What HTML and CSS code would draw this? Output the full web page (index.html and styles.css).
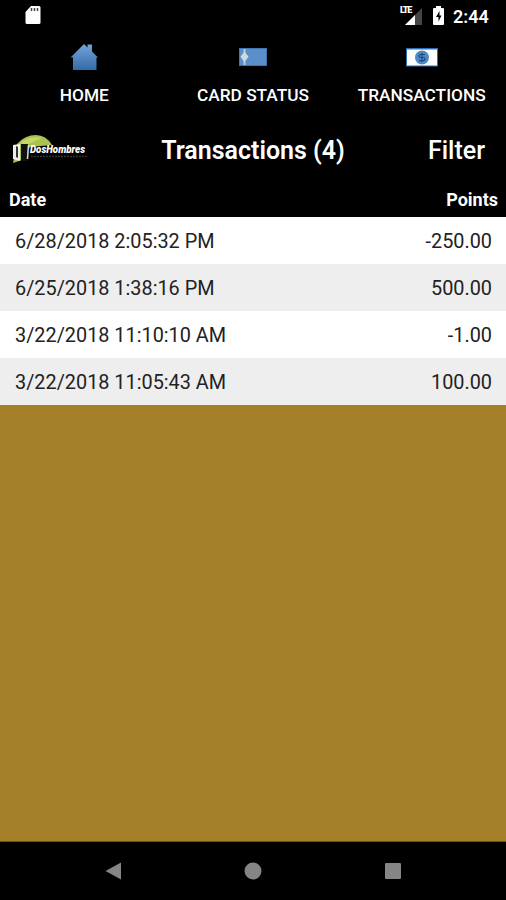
FILE: index.html
```html
<!DOCTYPE html>
<html lang="en">
<head>
<meta charset="utf-8">
<title>Transactions</title>
<link rel="stylesheet" href="styles.css">
</head>
<body>
<div class="status">
  <svg class="sd" width="16" height="20" viewBox="0 0 16 20"><path d="M6 1h8q1.500 0 1.500 1.500v15q0 1.500-1.500 1.500H2q-1.500 0-1.500-1.500V7z" fill="#fff"/><path d="M6.500 3v3M9.500 3v3M12.500 3v3" stroke="#444" stroke-width="1.500"/></svg>
  <div class="signal">
    <span class="lte">LTE</span>
    <svg width="17" height="17" viewBox="0 0 17 17"><path d="M17 0v17H0z" fill="#454545"/><path d="M10 7v10H0z" fill="#fff"/></svg>
  </div>
  <svg class="battery" width="11" height="19" viewBox="0 0 11 19"><path d="M3 0h5v2h2q1 0 1 1v15q0 1-1 1H1q-1 0-1-1V3q0-1 1-1h2z" fill="#fff"/><path d="M6.500 5L3 11h2.500v4.500l3-6H6.500z" fill="#000"/></svg>
  <span class="clock">2:44</span>
</div>
<nav class="tabs">
  <a class="tab">
    <svg width="28" height="28" viewBox="0 0 28 28"><defs><linearGradient id="blue" x2="0" y2="1"><stop stop-color="#73a5d8"/><stop offset="1" stop-color="#346aa9"/></linearGradient></defs><path d="M.5 14.500L14 1l3.500 3.500V1.500H22v7l6 6h-1.500V27H3V14.500z" fill="url(#blue)"/></svg>
    <span>HOME</span>
  </a>
  <a class="tab">
    <svg width="28" height="28" viewBox="0 0 28 28"><path d="M0 5h28v18H0z" fill="#5a90ca"/><path d="M.5 5.500h27v17H.5z" fill="none" stroke="#3f76b2"/><path d="M5.500 6v16" stroke="#b5cae0" stroke-width="2"/><path d="M5.500 8.500l4 5.200-4 5.200-4-5.200z" fill="#d4d8dd"/></svg>
    <span>CARD STATUS</span>
  </a>
  <a class="tab">
    <svg width="32" height="28" viewBox="0 0 32 28"><path d="M0 5h32v18.500H0z" fill="#2e6db0"/><path d="M1 6.500h30v16H1z" fill="#fff"/><circle cx="16" cy="14.500" r="7" fill="#4f8ac5"/><path d="M19 11.500h-4q-2 0-2 1.500t2 1.500h2q2 0 2 1.600t-2 1.600h-4M16 10v9" fill="none" stroke="#1d4c83" stroke-width="1.200"/></svg>
    <span>TRANSACTIONS</span>
  </a>
</nav>
<header class="title">
  <svg width="78" height="34" viewBox="0 0 78 34"><path d="M1 29L5 10Q13 1 24 1q10 0 16 10l-22 2-8 13z" fill="#a9c34d"/><path d="M8 9Q18 1 30 4L14 11z" fill="#c5d56b"/><path d="M1 11l7-1v17l-7-2z" fill="#eee"/><path d="M4 12l2 1v11l-2-1z" fill="#333"/><path d="M9 10h7v17H9z" fill="#111"/><path d="M16.500 11l-1 14" stroke="#ddd" stroke-width="1.500"/><text class="brand" x="18" y="19" textLength="55" lengthAdjust="spacingAndGlyphs">DosHombres</text><path d="M19 22.500h56" stroke="#343434" stroke-width="1.500" stroke-dasharray="2 1"/></svg>
  <h1>Transactions (4)</h1>
  <a class="filter">Filter</a>
</header>
<div class="columns"><span>Date</span><span>Points</span></div>
<main>
  <div class="row"><span>6/28/2018 2:05:32 PM</span><span>-250.00</span></div>
  <div class="row"><span>6/25/2018 1:38:16 PM</span><span>500.00</span></div>
  <div class="row"><span>3/22/2018 11:10:10 AM</span><span>-1.00</span></div>
  <div class="row"><span>3/22/2018 11:05:43 AM</span><span>100.00</span></div>
</main>
<footer class="system">
  <svg width="18" height="18" viewBox="0 0 18 18"><path d="M1.500 9L17 .5v17z"/></svg>
  <svg width="18" height="18" viewBox="0 0 18 18"><circle cx="9" cy="9" r="8.500"/></svg>
  <svg width="18" height="18" viewBox="0 0 18 18"><rect x="1" y="1" width="16" height="16" rx="1"/></svg>
</footer>
</body>
</html>
```
FILE: styles.css
```css
* { box-sizing: border-box; }
body {
  margin: 0;
  height: 900px;
  display: flex;
  flex-direction: column;
  background: #000;
  color: #fff;
  font-family: Roboto, "Liberation Sans", sans-serif;
  overflow: hidden;
}
svg { display: block; flex: none; overflow: visible; }
.status {
  height: 32px;
  display: flex;
  align-items: center;
  padding: 0 18px 0 25px;
}
.sd { margin-top: -2px; }
.signal {
  position: relative;
  margin-left: auto;
  width: 22px;
  height: 19px;
  display: flex;
  align-items: flex-end;
  justify-content: flex-end;
}
.lte {
  position: absolute;
  left: 0;
  top: 0;
  font-size: 9px;
  line-height: 9px;
  font-weight: 900;
  letter-spacing: -1.2px;
}
.signal, .battery { margin-top: -1px; }
.battery { margin-left: 11px; margin-right: 9px; }
.clock { width: 35px; font-size: 18px; font-weight: 600; white-space: nowrap; }
.tabs {
  height: 86px;
  display: grid;
  grid-template-columns: repeat(3, 1fr);
  padding-top: 11px;
}
.tab {
  display: flex;
  flex-direction: column;
  align-items: center;
  font-size: 17.300px;
  font-weight: 500;
  line-height: 20px;
  gap: 14px;
}
.title {
  height: 65px;
  display: grid;
  grid-template-columns: 110px 1fr 101px;
  align-items: center;
  padding: 0 21px 0 12px;
}
.title h1 { margin: 0; text-align: center; font-size: 25px; font-weight: 600; }
.filter { text-align: right; font-size: 25px; font-weight: 500; }
.brand { font-size: 11px; font-weight: 900; font-style: italic; fill: #fff; }
.columns {
  height: 34px;
  display: flex;
  justify-content: space-between;
  align-items: center;
  padding: 0 8px 2px 9px;
  font-size: 18px;
  font-weight: 700;
}
main { flex: 1; background: #a5802b; border-bottom: 1px solid #705516; }
.row {
  height: 47px;
  display: flex;
  justify-content: space-between;
  align-items: center;
  padding: 2px 14px 0 15px;
  background: #fff;
  color: #222;
  font-size: 19.850px;
}
.row:nth-child(even) { background: #eee; }
.system {
  height: 58px;
  display: flex;
  justify-content: space-between;
  align-items: center;
  padding: 0 104px;
}
.system svg { fill: #858585; }
```
